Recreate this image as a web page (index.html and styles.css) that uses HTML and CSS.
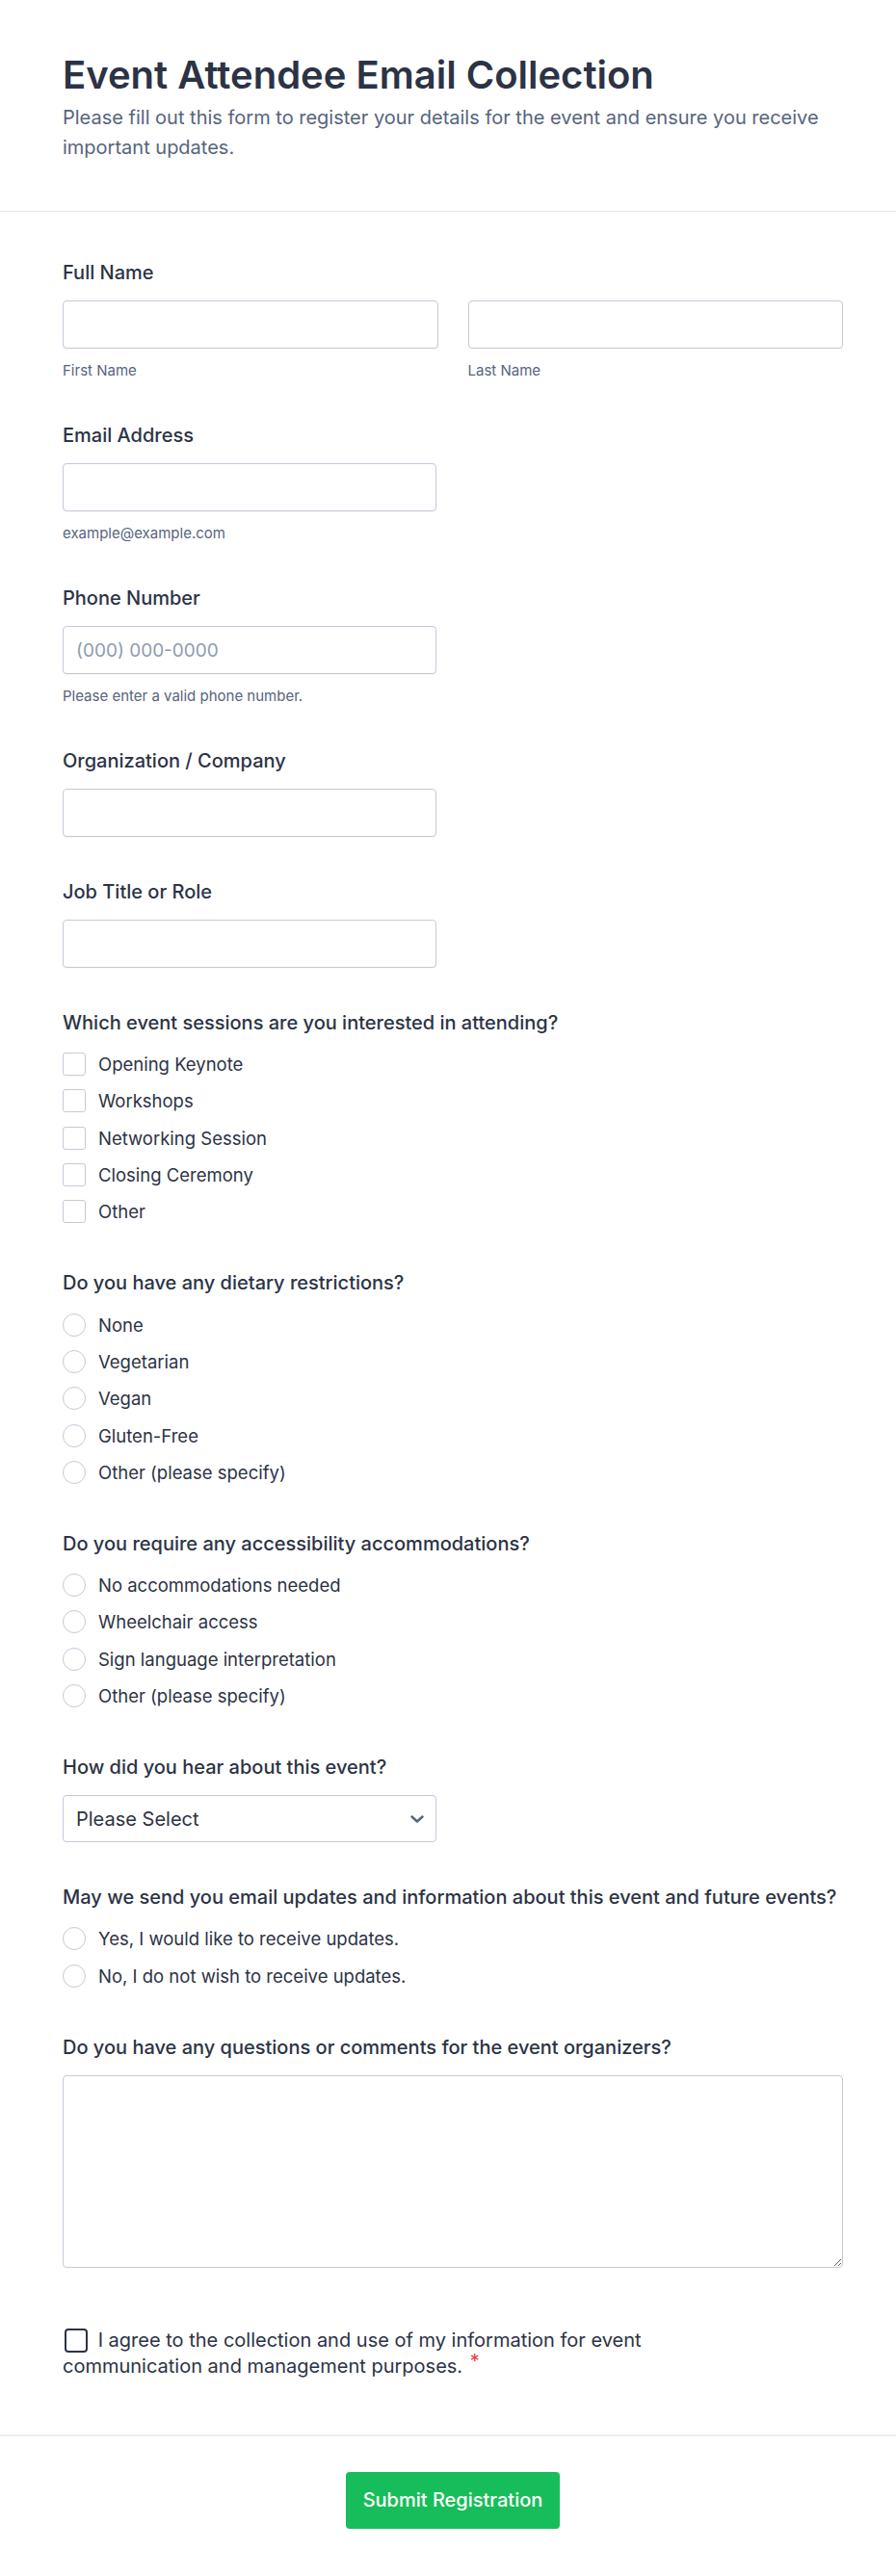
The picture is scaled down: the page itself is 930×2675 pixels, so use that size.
FILE: index.html
```html
<!DOCTYPE html>
<html lang="en">
<head>
<meta charset="utf-8">
<title>Event Attendee Email Collection</title>
<link rel="stylesheet" href="styles.css">
</head>
<body>
<div class="page">
  <header class="header">
    <h1 class="title">Event Attendee Email Collection</h1>
    <p class="desc">Please fill out this form to register your details for the event and ensure you receive important updates.</p>
  </header>

  <form class="form">
    <div class="field">
      <label class="label">Full Name</label>
      <div class="name-row">
        <div class="name-col">
          <input class="input" type="text">
          <span class="sublabel">First Name</span>
        </div>
        <div class="name-col">
          <input class="input" type="text">
          <span class="sublabel">Last Name</span>
        </div>
      </div>
    </div>

    <div class="field">
      <label class="label">Email Address</label>
      <input class="input half" type="email">
      <span class="sublabel">example@example.com</span>
    </div>

    <div class="field">
      <label class="label">Phone Number</label>
      <input class="input half" type="tel" placeholder="(000) 000-0000">
      <span class="sublabel">Please enter a valid phone number.</span>
    </div>

    <div class="field">
      <label class="label">Organization / Company</label>
      <input class="input half" type="text">
    </div>

    <div class="field">
      <label class="label">Job Title or Role</label>
      <input class="input half" type="text">
    </div>

    <div class="field">
      <label class="label">Which event sessions are you interested in attending?</label>
      <div class="options">
        <label class="option"><input class="check" type="checkbox"><span>Opening Keynote</span></label>
        <label class="option"><input class="check" type="checkbox"><span>Workshops</span></label>
        <label class="option"><input class="check" type="checkbox"><span>Networking Session</span></label>
        <label class="option"><input class="check" type="checkbox"><span>Closing Ceremony</span></label>
        <label class="option"><input class="check" type="checkbox"><span>Other</span></label>
      </div>
    </div>

    <div class="field">
      <label class="label">Do you have any dietary restrictions?</label>
      <div class="options">
        <label class="option"><input class="radio" type="radio" name="diet"><span>None</span></label>
        <label class="option"><input class="radio" type="radio" name="diet"><span>Vegetarian</span></label>
        <label class="option"><input class="radio" type="radio" name="diet"><span>Vegan</span></label>
        <label class="option"><input class="radio" type="radio" name="diet"><span>Gluten-Free</span></label>
        <label class="option"><input class="radio" type="radio" name="diet"><span>Other (please specify)</span></label>
      </div>
    </div>

    <div class="field">
      <label class="label">Do you require any accessibility accommodations?</label>
      <div class="options">
        <label class="option"><input class="radio" type="radio" name="acc"><span>No accommodations needed</span></label>
        <label class="option"><input class="radio" type="radio" name="acc"><span>Wheelchair access</span></label>
        <label class="option"><input class="radio" type="radio" name="acc"><span>Sign language interpretation</span></label>
        <label class="option"><input class="radio" type="radio" name="acc"><span>Other (please specify)</span></label>
      </div>
    </div>

    <div class="field">
      <label class="label">How did you hear about this event?</label>
      <div class="select-wrap half">
        <select class="select">
          <option>Please Select</option>
        </select>
        <svg class="chevron" viewBox="0 0 14 8" width="14" height="8" aria-hidden="true"><path d="M1.5 1.5 L7 6.5 L12.5 1.5" fill="none" stroke="#57647e" stroke-width="2.4" stroke-linecap="round" stroke-linejoin="round"/></svg>
      </div>
    </div>

    <div class="field">
      <label class="label">May we send you email updates and information about this event and future events?</label>
      <div class="options">
        <label class="option"><input class="radio" type="radio" name="upd"><span>Yes, I would like to receive updates.</span></label>
        <label class="option"><input class="radio" type="radio" name="upd"><span>No, I do not wish to receive updates.</span></label>
      </div>
    </div>

    <div class="field">
      <label class="label">Do you have any questions or comments for the event organizers?</label>
      <textarea class="textarea"></textarea>
    </div>

    <div class="field agree">
      <label class="agree-label"><input class="agree-check" type="checkbox"> I agree to the collection and use of my information for event communication and management purposes. <span class="req">*</span></label>
    </div>
  </form>

  <footer class="footer">
    <button class="submit" type="button">Submit Registration</button>
  </footer>
</div>
</body>
</html>
```
FILE: styles.css
```css
* { box-sizing: border-box; }
html, body { margin: 0; padding: 0; background: #ffffff; }
body {
  font-family: Inter, "Noto Sans", "Liberation Sans", sans-serif;
  color: #2c3345;
}
.page { width: 930px; min-height: 2675px; }

.header {
  padding: 55px 65px 50px;
  border-bottom: 1px solid #e3e5ec;
}
.title {
  margin: 0;
  font-size: 40px;
  line-height: 46px;
  font-weight: 600;
  color: #2c3345;
}
.desc {
  margin: 6px 0 0;
  font-size: 20px;
  line-height: 31px;
  color: #57647e;
  max-width: 800px;
}

.form {
  padding: 51px 55px 57px 65px;
  display: flex;
  flex-direction: column;
  gap: 45px;
}
.field { display: flex; flex-direction: column; }
.label {
  font-size: 20px;
  line-height: 24px;
  font-weight: 500;
  margin-bottom: 17px;
}
.name-row { display: flex; gap: 31px; }
.name-col { flex: 1; display: flex; flex-direction: column; }
.input {
  width: 100%;
  height: 50px;
  border: 1px solid #c3cad8;
  border-radius: 4px;
  padding: 0 13px;
  font-family: inherit;
  font-size: 19px;
  color: #2c3345;
  background: #fff;
  box-shadow: 0 1px 0 rgba(0,0,0,0.03);
}
.input::placeholder { color: #8f9bb0; }
.half { width: 388px; }
.sublabel {
  margin-top: 13px;
  font-size: 15px;
  line-height: 20px;
  color: #57647e;
}

.options { display: flex; flex-direction: column; margin-top: -5px; margin-bottom: -2px; }
.option {
  display: flex;
  align-items: center;
  gap: 13px;
  height: 38.3px;
  font-size: 18.5px;
  line-height: 24px;
  color: #2c3345;
}
.check, .radio {
  appearance: none;
  -webkit-appearance: none;
  margin: 0;
  width: 24px;
  height: 24px;
  border: 1.5px solid #c3cad8;
  background: #fff;
  flex: none;
}
.check { border-radius: 3px; }
.radio { border-radius: 50%; }

.select-wrap { position: relative; height: 49px; }
.select {
  appearance: none;
  -webkit-appearance: none;
  width: 100%;
  height: 49px;
  border: 1px solid #c3cad8;
  border-radius: 4px;
  padding: 0 40px 0 13px;
  font-family: inherit;
  font-size: 20px;
  color: #2c3345;
  background: #fff;
}
.chevron { position: absolute; right: 13px; top: 21px; pointer-events: none; }

.textarea {
  width: 100%;
  height: 200px;
  border: 1px solid #c3cad8;
  border-radius: 4px;
  font-family: inherit;
  font-size: 18px;
  padding: 10px 13px;
  resize: vertical;
}

.agree { margin-top: 17px; }
.agree-label {
  display: block;
  max-width: 700px;
  font-size: 20px;
  line-height: 27px;
  color: #2c3345;
}
.agree-check {
  appearance: none;
  -webkit-appearance: none;
  margin: 0 5px 0 2px;
  width: 24px;
  height: 25px;
  border: 2px solid #2c3345;
  border-radius: 4px;
  vertical-align: -6px;
  background: #fff;
}
.req { color: #f23a3c; position: relative; top: -5px; margin-left: 2px; }

.footer {
  border-top: 2px solid #eceef4;
  padding: 37px 55px 50px 65px;
  display: flex;
  justify-content: center;
}
.submit {
  height: 59px;
  padding: 0 18px;
  border: none;
  border-radius: 4px;
  background: #18bd5b;
  color: #fff;
  font-family: inherit;
  font-size: 20px;
  font-weight: 500;
}
```
